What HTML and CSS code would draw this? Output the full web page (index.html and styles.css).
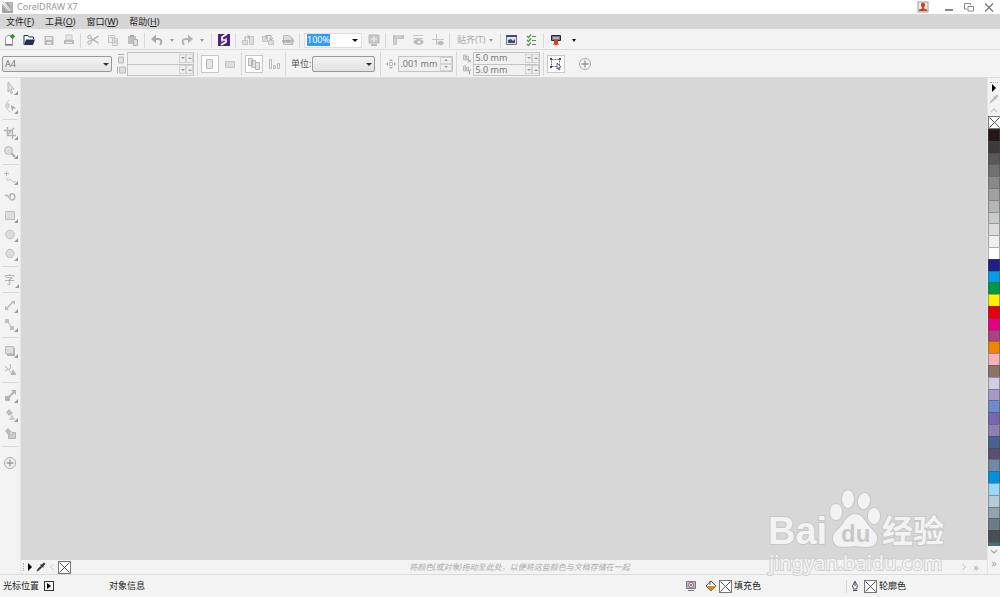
FILE: index.html
```html
<!DOCTYPE html>
<html lang="zh-CN">
<head>
    <meta charset="UTF-8">
    <meta name="viewport" content="width=device-width, initial-scale=1.0">
    <title>CorelDRAW X7</title>
    <link rel="stylesheet" href="styles.css">
</head>
<body>
    <svg width="0" height="0" class="defs">
        <symbol id="nocolor" viewBox="0 0 13 13">
            <rect x=".5" y=".5" width="12" height="12" fill="#fff" stroke="#777"/>
            <path d="M1.500 1.500l10 10M11.500 1.500l-10 10" stroke="#444" stroke-width=".9"/>
        </symbol>
        <symbol id="dropper" viewBox="0 0 12 12">
            <path d="M1 11l1-2.500 4-4 1.500 1.500-4 4z" fill="currentColor" stroke="currentColor" stroke-width=".5"/>
            <path d="M5 3.500l3.500 3.500 1-1-.8-.8L11 3c.8-1-.9-2.800-2-2L6.800 3.200 6 2.500z" fill="currentColor"/>
        </symbol>
        <symbol id="plus" viewBox="0 0 16 16">
            <circle cx="8" cy="8" r="5.500" fill="none" stroke="#aaa"/>
            <path d="M8 4.500v7M4.500 8h7" stroke="#999" stroke-width="1.400"/>
        </symbol>
        <symbol id="corner" viewBox="0 0 4 4"><path d="M4 0v4H0z" fill="#999"/></symbol>
    </svg>

    <header class="titlebar">
        <svg class="logo" viewBox="0 0 12 12"><rect width="12" height="12" fill="#a4a4a4"/><path d="M3 0l7 9-3 1L0 3V0z" fill="#fff"/><path d="M0 2l8 8M1 0l8 9M5 0l5 8" stroke="#999" stroke-width=".8"/><path d="M6 0h6v9h-2z" fill="#b4b4b4"/></svg>
        <h1>CorelDRAW X7</h1>
        <div class="window-buttons">
            <button class="user" aria-label="用户"><svg viewBox="0 0 12 12"><rect x="1" y="1" width="10" height="10" fill="#eee" stroke="#999"/><circle cx="6" cy="4" r="2.200" fill="#d0401c"/><path d="M5 5h2v2.500l3 1V10H2V8.500l3-1z" fill="#d0401c"/></svg></button>
            <button aria-label="最小化"><svg viewBox="0 0 12 12"><path d="M2 9h8" stroke="#888" stroke-width="2"/></svg></button>
            <button aria-label="还原"><svg viewBox="0 0 12 12"><path d="M4 8H1.500V2.500h6V4M5 5.500h5.500V10H5z" fill="none" stroke="#888"/></svg></button>
            <button aria-label="关闭"><svg viewBox="0 0 12 12"><path d="M2 2.500l8 8M10 2.500l-8 8" stroke="#777" stroke-width="1.300"/></svg></button>
        </div>
    </header>

    <nav class="menubar">
        <a href="#">文件(<u>F</u>)</a>
        <a href="#">工具(<u>O</u>)</a>
        <a href="#">窗口(<u>W</u>)</a>
        <a href="#">帮助(<u>H</u>)</a>
    </nav>

    <div class="toolbar">
        <div class="group">
            <button aria-label="新建"><svg viewBox="0 0 16 16"><path d="M4.500 5.500L7 3.500h4.500v9h-7z" fill="#fff" stroke="#99a"/><path d="M4 13h8" stroke="#556"/><circle cx="11.500" cy="4.500" r="2" fill="#2e9c1c"/><path d="M11.500 2v5M9 4.500h5" stroke="#2e9c1c"/></svg></button>
            <button aria-label="打开"><svg viewBox="0 0 16 16"><path d="M3 12.500v-9h4l1 1.500h4.500v2" fill="#fff" stroke="#223058"/><path d="M3 13l2-5.500h9L12 13z" fill="#223058"/></svg></button>
            <button aria-label="保存"><svg viewBox="0 0 16 16"><path d="M3.500 4h9v9h-9z" fill="#bbb"/><path d="M5 5h6v3H5zM6 10h4v2H6z" fill="#e6e6e6"/></svg></button>
            <button aria-label="打印"><svg viewBox="0 0 16 16"><path d="M5 3h6v5H5z" fill="#e8e8e8" stroke="#c4c4c4"/><path d="M3 8h10v4H3z" fill="#bbb"/><path d="M5 10.500h6" stroke="#eee"/></svg></button>
        </div>
        <div class="group">
            <button aria-label="剪切"><svg viewBox="0 0 16 16"><path d="M13.500 4L6 9M13.500 11L6 6.500" stroke="#aaa" stroke-width="1.400"/><circle cx="4.500" cy="5" r="1.700" fill="none" stroke="#aaa"/><circle cx="4.500" cy="10.500" r="1.700" fill="none" stroke="#aaa"/></svg></button>
            <button aria-label="复制"><svg viewBox="0 0 16 16"><path d="M3.500 3.500h6v7h-6zM7.500 6.500h5v7h-5z" fill="#eee" stroke="#c4c4c4"/><path d="M9 9h3M9 11h3M5 5.500h3" stroke="#bbb"/></svg></button>
            <button aria-label="粘贴"><svg viewBox="0 0 16 16"><path d="M3 4h8v8H3z" fill="#c0c0c0"/><path d="M5 3h4v2H5z" fill="#aaa"/><path d="M8.500 7.500h4v6h-4z" fill="#ddd" stroke="#b0b0b0"/></svg></button>
        </div>
        <div class="group group-undo">
            <button aria-label="撤消"><svg viewBox="0 0 16 16"><path d="M4.500 7H9c4 0 4 3.500 2 6" fill="none" stroke="#aaa" stroke-width="2"/><path d="M2 7l5-4.500v9z" fill="#aaa"/></svg></button>
            <button class="caret" aria-label="撤消列表"></button>
            <button aria-label="重做"><svg viewBox="0 0 16 16"><path d="M11.500 7H7c-4 0-4 3.500-2 6" fill="none" stroke="#b4b4b4" stroke-width="2"/><path d="M14 7L9 2.500v9z" fill="#b4b4b4"/></svg></button>
            <button class="caret" aria-label="重做列表"></button>
        </div>
        <div class="group">
            <button aria-label="搜索内容"><svg viewBox="0 0 16 16"><path d="M2 2h12v12H2z" fill="#4d2472"/><path d="M11 2L6 5v3h4v2l-5 3" fill="none" stroke="#fff" stroke-width="1.700"/><path d="M5 10l6-4" stroke="#d8c8e8"/></svg></button>
        </div>
        <div class="group">
            <button aria-label="导入"><svg viewBox="0 0 16 16"><path d="M2.500 8.500h5v4h-5zM9.500 4.500h4v8h-4z" fill="#ddd" stroke="#c4c4c4"/><path d="M5 8V5h4M7.500 3L10 5 7.500 7" fill="none" stroke="#aaa"/></svg></button>
            <button aria-label="导出"><svg viewBox="0 0 16 16"><path d="M2.500 4.500h5v5h-5zM8.500 8.500h5v4h-5z" fill="#ddd" stroke="#c4c4c4"/><path d="M6 7V3.500h5V7M9 6l2 2 2-2" fill="none" stroke="#aaa"/></svg></button>
            <button aria-label="发布为 PDF"><svg viewBox="0 0 16 16"><path d="M3.500 3.500h6L13 7v5.500H3.500z" fill="#ddd" stroke="#bbb"/><path d="M2 8h9V6l3.500 3-3.500 3v-2H2z" fill="#bbb"/><path d="M4 8v3M7 8v3M9 8v3" stroke="#999"/></svg></button>
        </div>
        <div class="group">
            <div class="zoom-combo">
                <input type="text" value="100%" aria-label="缩放级别">
                <button class="caret dark" aria-label="缩放列表"></button>
            </div>
            <button aria-label="全屏预览"><svg viewBox="0 0 16 16"><path d="M3 3h10v8H3z" fill="#c8c8c8" stroke="#bbb"/><path d="M8 4v6M5 7h6" stroke="#f3f3f3"/><path d="M5 13h6" stroke="#bbb" stroke-width="2"/></svg></button>
        </div>
        <div class="group">
            <button aria-label="显示标尺"><svg viewBox="0 0 16 16"><path d="M3 3h11v4H7v6H3z" fill="#c4c4c4"/><path d="M5 7v6M7 3v3M10 3v2" stroke="#ddd"/></svg></button>
            <button aria-label="显示网格"><svg viewBox="0 0 16 16"><path d="M3 3h10v1H3zM3 6h10v1H3z" fill="#c4c4c4"/><path d="M3 10c3-4 8-4 11 0-3 4-8 4-11 0z" fill="#bbb"/><circle cx="9" cy="10" r="1.500" fill="#eee"/></svg></button>
            <button aria-label="显示辅助线"><svg viewBox="0 0 16 16"><path d="M6.500 2v11M2 7.500h12" stroke="#c4c4c4"/><path d="M7 11c2-3 5-3 7 0-2 3-5 3-7 0z" fill="#bbb"/></svg></button>
        </div>
        <div class="group group-snap">
            <button class="snap">贴齐(T)</button>
            <button class="caret" aria-label="贴齐选项"></button>
        </div>
        <div class="group group-options">
            <button aria-label="欢迎屏幕"><svg viewBox="0 0 16 16"><path d="M2.500 3.500h10v9h-10z" fill="#dfe3ef" stroke="#6a7290"/><path d="M2 3h11v2H2z" fill="#404b74"/><path d="M4 11V8l3-1 2 2 2-2v4z" fill="#404b74"/></svg></button>
            <button aria-label="选项"><svg viewBox="0 0 16 16"><path d="M3 4l1.500 1.500L7 2.500M3 8l1.500 1.500L7 6.500M3 12l1.500 1.500L7 10.500" fill="none" stroke="#4f9a45" stroke-width="1.300"/><path d="M8 4.500h4M8 8.500h4M8 12.500h4" stroke="#777"/></svg></button>
        </div>
        <div class="group last">
            <button aria-label="应用程序启动器"><svg viewBox="0 0 16 16"><path d="M3.500 3.500h9v5h-9z" fill="#778" stroke="#223"/><path d="M5 5h6v2H5z" fill="#aab"/><path d="M6 8h4v3l1 2-2-.5-1 1.500-1-1.500-2 .5 1-2z" fill="#dd3a1e"/></svg></button>
            <button class="caret dark" aria-label="启动器列表"></button>
        </div>
    </div>

    <div class="propbar">
        <div class="group">
            <span class="select page-size">
                <select aria-label="页面大小"><option>A4</option></select>
            </span>
            <div class="size-icons">
                <svg viewBox="0 0 10 10"><path d="M2.500 3.500h5v6h-5z" fill="#ddd" stroke="#bbb"/><path d="M2 1h6" stroke="#aaa"/></svg>
                <svg viewBox="0 0 10 10"><path d="M3.500 2.500h6v6h-6z" fill="#ddd" stroke="#bbb"/><path d="M1.500 2v7" stroke="#aaa"/></svg>
            </div>
            <div class="pair">
                <div class="field"><input type="text" aria-label="页面宽度"><button class="down" aria-label="减少"></button><button class="up" aria-label="增加"></button></div>
                <div class="field"><input type="text" aria-label="页面高度"><button class="down" aria-label="减少"></button><button class="up" aria-label="增加"></button></div>
            </div>
        </div>
        <div class="group">
            <button class="pressed" aria-label="纵向"><svg viewBox="0 0 16 16"><path d="M4.500 3.500h6v9h-6z" fill="#e4e4e4" stroke="#bbb"/></svg></button>
            <button aria-label="横向"><svg viewBox="0 0 16 16"><path d="M3.500 5.500h9v6h-9z" fill="#ddd" stroke="#c4c4c4"/></svg></button>
        </div>
        <div class="group">
            <button class="pressed" aria-label="所有页面"><svg viewBox="0 0 16 16"><path d="M2.500 2.500h4v7h-4zM5.500 4.500h4v7h-4zM9.500 6.500h4v7h-4z" fill="#e4e4e4" stroke="#b4b4b4"/></svg></button>
            <button aria-label="当前页"><svg viewBox="0 0 16 16"><path d="M3.500 3.500h2v9h-2zM7.500 9.500h2v3h-2zM11.500 7.500h2v5h-2z" fill="#eee" stroke="#bbb"/></svg></button>
        </div>
        <div class="group group-units">
            <label for="units">单位:</label>
            <span class="select units"><select id="units"><option></option></select></span>
        </div>
        <div class="group group-nudge">
            <svg class="icon-small" viewBox="0 0 10 10"><path d="M5 0l2 2H3zM5 10L3 8h4zM0 5l2-2v4zM10 5L8 7V3z" fill="#aaa"/><path d="M3.500 3.500h3v3h-3z" fill="none" stroke="#bbb"/></svg>
            <div class="field nudge"><input type="text" value=".001 mm" aria-label="微调距离"><div class="spin"><button class="up" aria-label="增加"></button><button class="down" aria-label="减少"></button></div></div>
        </div>
        <div class="group group-offset">
            <div class="size-icons">
                <svg viewBox="0 0 10 10"><path d="M1.500 1.500h2v5h-2zM4.500 2.500h2v4h-2z" fill="#ddd" stroke="#bbb"/><path d="M6 6l3 3M9 6L6 9" stroke="#999"/></svg>
                <svg viewBox="0 0 10 10"><path d="M1.500 1.500h2v5h-2zM4.500 2.500h2v4h-2z" fill="#ddd" stroke="#bbb"/><path d="M6 5l1.500 2L9 5M7.500 7v3" fill="none" stroke="#999"/></svg>
            </div>
            <div class="pair">
                <div class="field"><input type="text" value="5.0 mm" aria-label="再制距离 X"><button class="down" aria-label="减少"></button><button class="up" aria-label="增加"></button></div>
                <div class="field"><input type="text" value="5.0 mm" aria-label="再制距离 Y"><button class="down" aria-label="减少"></button><button class="up" aria-label="增加"></button></div>
            </div>
        </div>
        <div class="group last">
            <button class="pressed" aria-label="视为已填充"><svg viewBox="0 0 16 16"><path d="M3.500 3.500h8v7h-8z" fill="none" stroke="#668" stroke-dasharray="2 1"/><path d="M2 2h2v2H2zM11 2h2v2h-2zM2 10h2v2H2z" fill="#446"/><path d="M9 7l4 4-2 .3 1 2.200-1 .5-1-2.300L9 13z" fill="#fff" stroke="#446" stroke-width=".8"/></svg></button>
            <button class="add" aria-label="快速自定义"><svg viewBox="0 0 16 16"><use href="#plus"/></svg></button>
        </div>
    </div>

    <div class="main">
        <aside class="toolbox">
            <div class="tools">
                <button aria-label="选择"><svg viewBox="0 0 16 16"><path d="M6 2l6 7-3 .5 1.500 3.500-1.500.7L7.500 10 6 12z" fill="#ddd" stroke="#bbb"/><use href="#corner" x="12" y="11" width="4" height="4"/></svg></button>
                <button aria-label="形状"><svg viewBox="0 0 16 16"><path d="M7 1C3 5 3 9 8 13" fill="none" stroke="#c4c4c4"/><path d="M4 5h3v3H4z" fill="#ddd" stroke="#c4c4c4"/><path d="M9 6l5 3-3 1-1 3z" fill="#aaa"/><use href="#corner" x="12" y="11" width="4" height="4"/></svg></button>
            </div>
            <div class="tools">
                <button aria-label="裁剪"><svg viewBox="0 0 16 16"><path d="M5.500 2v8.500H14M2 5.500h8.500V14M12 3l-7 7" fill="none" stroke="#b4b4b4" stroke-width="1.400"/><use href="#corner" x="12" y="11" width="4" height="4"/></svg></button>
                <button aria-label="缩放"><svg viewBox="0 0 16 16"><path d="M9 9l4 4" stroke="#aaa" stroke-width="2"/><circle cx="6.500" cy="6.500" r="4" fill="#ddd" stroke="#bbb"/><use href="#corner" x="12" y="11" width="4" height="4"/></svg></button>
            </div>
            <div class="tools">
                <button aria-label="手绘"><svg viewBox="0 0 16 16"><path d="M4.500 1v5M2 3.500h5M4 8c3 6 3-1 5 2s2 1 5 2" fill="none" stroke="#bbb"/><use href="#corner" x="12" y="11" width="4" height="4"/></svg></button>
                <button aria-label="艺术笔"><svg viewBox="0 0 16 16"><path d="M3 7c3-3 4 4 7 4s4-5 1-6-4 1-2 3" fill="none" stroke="#b4b4b4" stroke-width="1.500"/></svg></button>
                <button aria-label="矩形"><svg viewBox="0 0 16 16"><path d="M3.500 3.500h9v8h-9z" fill="#ddd" stroke="#c0c0c0"/><use href="#corner" x="12" y="11" width="4" height="4"/></svg></button>
                <button aria-label="椭圆形"><svg viewBox="0 0 16 16"><circle cx="8" cy="7.500" r="4.300" fill="#ddd" stroke="#c0c0c0"/><use href="#corner" x="12" y="11" width="4" height="4"/></svg></button>
                <button aria-label="多边形"><svg viewBox="0 0 16 16"><path d="M6 3.500h4l2.500 4-2.500 4H6l-2.500-4z" fill="#ddd" stroke="#c0c0c0"/><use href="#corner" x="12" y="11" width="4" height="4"/></svg></button>
            </div>
            <div class="tools">
                <button class="text-tool" aria-label="文本">字<svg viewBox="0 0 4 4"><use href="#corner"/></svg></button>
            </div>
            <div class="tools">
                <button aria-label="平行度量"><svg viewBox="0 0 16 16"><path d="M4 11l8-8" stroke="#b4b4b4" stroke-width="1.500"/><path d="M3 8l4 4H3zM9 3h4v4z" fill="#bbb"/><use href="#corner" x="12" y="11" width="4" height="4"/></svg></button>
                <button aria-label="直线连接器"><svg viewBox="0 0 16 16"><path d="M5 4l5 7" stroke="#b4b4b4"/><path d="M3 2h4v4H3zM8 9h4v4H8z" fill="#c0c0c0"/><use href="#corner" x="12" y="11" width="4" height="4"/></svg></button>
            </div>
            <div class="tools">
                <button aria-label="阴影"><svg viewBox="0 0 16 16"><path d="M5 5h8v8H5z" fill="#b4b4b4"/><path d="M3.500 3.500h8v7h-8z" fill="#ddd" stroke="#bbb"/><use href="#corner" x="12" y="11" width="4" height="4"/></svg></button>
                <button aria-label="透明度"><svg viewBox="0 0 16 16"><path d="M3 9l6-3-1-4M3 4l6 6" fill="none" stroke="#b4b4b4"/><path d="M11 7l3.500 6h-6z" fill="#b4b4b4"/></svg></button>
            </div>
            <div class="tools">
                <button aria-label="颜色滴管"><svg viewBox="0 0 16 16"><path d="M3 8h5v5H3z" fill="#b4b4b4"/><path d="M6 10l6-6" stroke="#b4b4b4" stroke-width="2"/><path d="M9 2h5v5z" fill="#b4b4b4"/><use href="#corner" x="12" y="11" width="4" height="4"/></svg></button>
                <button aria-label="交互式填充"><svg viewBox="0 0 16 16"><path d="M7 2l4 4-4 3-3-4z" fill="#bbb"/><path d="M10 7l3 6H7z" fill="#ccc"/><use href="#corner" x="12" y="11" width="4" height="4"/></svg></button>
                <button aria-label="智能填充"><svg viewBox="0 0 16 16"><path d="M6 2l4 4-4 3-3-4z" fill="#bbb"/><path d="M6.500 8.500h4v-2h3v6h-7z" fill="#ccc" stroke="#b4b4b4"/></svg></button>
            </div>
            <button class="add" aria-label="快速自定义"><svg viewBox="0 0 16 16"><use href="#plus"/></svg></button>
        </aside>

        <div class="center">
            <main class="workspace"></main>
            <div class="doc-palette">
                <span class="grip"></span>
                <button class="play" aria-label="文档调色板菜单"></button>
                <button aria-label="滴管"><svg class="icon-small drop-dark" viewBox="0 0 12 12"><use href="#dropper"/></svg></button>
                <button aria-label="向左滚动"><svg class="arrow" viewBox="0 0 6 10"><path d="M4.500 2L1.500 5l3 3" fill="none" stroke="#c4c4c4"/></svg></button>
                <button aria-label="无颜色"><svg class="x-box" viewBox="0 0 13 13"><use href="#nocolor"/></svg></button>
                <p class="hint">将颜色(或对象)拖动至此处，以便将这些颜色与文档存储在一起</p>
                <button aria-label="向右滚动"><svg class="arrow" viewBox="0 0 6 10"><path d="M1.500 2l3 3-3 3" fill="none" stroke="#bbb"/></svg></button>
                <button class="more" aria-label="展开">»</button>
            </div>
        </div>

        <aside class="palette">
            <span class="grip"></span>
            <button class="play" aria-label="调色板菜单"></button>
            <button aria-label="滴管"><svg class="icon-small drop-light" viewBox="0 0 12 12"><use href="#dropper"/></svg></button>
            <button aria-label="向上滚动"><svg class="chev" viewBox="0 0 10 8"><path d="M2 5.500l3-3 3 3" fill="none" stroke="#ccc" stroke-width="1.300"/></svg></button>
            <button aria-label="无颜色"><svg class="x-box" viewBox="0 0 13 13"><use href="#nocolor"/></svg></button>
            <div class="swatches" id="swatches"></div>
            <button aria-label="向下滚动"><svg class="chev" viewBox="0 0 10 8"><path d="M2 2.500l3 3 3-3" fill="none" stroke="#aaa" stroke-width="1.300"/></svg></button>
            <button class="more" aria-label="展开">»</button>
        </aside>
    </div>

    <footer class="statusbar">
        <span>光标位置</span>
        <button class="play boxed" aria-label="光标信息"></button>
        <span class="object-info">对象信息</span>
        <div class="color-info">
            <svg class="status-icon" viewBox="0 0 12 12"><path d="M1.500 1.500h9v7h-9z" fill="#b9b4d0" stroke="#778"/><circle cx="6" cy="5" r="2.500" fill="#eee" stroke="#a66"/><circle cx="6" cy="5" r="1" fill="#558"/><path d="M3 10.500h6" stroke="#778"/></svg>
            <svg class="status-icon" viewBox="0 0 12 12"><path d="M6 1l5 5-5 5-5-5z" fill="#fff" stroke="#556"/><path d="M2 6h9l-5 5z" fill="#e88318"/><path d="M5 1v4" stroke="#556"/></svg>
            <svg class="x-box" viewBox="0 0 13 13"><use href="#nocolor"/></svg>
            <span>填充色</span>
        </div>
        <div class="color-info outline-info">
            <svg class="status-icon" viewBox="0 0 12 12"><path d="M6 1l2.500 5L7.500 9h-3l-1-3z" fill="#eee" stroke="#556"/><path d="M6 2v4M4 10.500h4" stroke="#445"/></svg>
            <svg class="x-box" viewBox="0 0 13 13"><use href="#nocolor"/></svg>
            <span>轮廓色</span>
        </div>
    </footer>

    <svg class="watermark" viewBox="0 0 190 95">
        <g class="mark">
            <text class="bai" x="8" y="59">Bai</text>
            <ellipse cx="76" cy="27" rx="6" ry="8"/>
            <ellipse cx="88" cy="14" rx="6" ry="9"/>
            <ellipse cx="104" cy="16" rx="6" ry="8" transform="rotate(10 104 16)"/>
            <ellipse cx="114" cy="31" rx="6" ry="8"/>
            <path d="M95 29c6 0 9 5 13 11 4 5 9 8 9 13 0 6-4 9-10 9-5 0-8-1-12-1s-7 1-12 1c-6 0-10-3-10-9 0-5 5-8 9-13 4-6 7-11 13-11z"/>
            <text class="jingyan" x="122" y="57">经验</text>
            <text class="url" x="9" y="85">jingyan.baidu.com</text>
        </g>
        <text class="du" x="81" y="57">du</text>
    </svg>

    <script>
        const colors = [
            '#231815', '#3e3a39', '#595757', '#727171', '#898989', '#9fa0a0',
            '#b5b5b6', '#c9caca', '#dcdddd', '#efefef', '#ffffff', '#1d2088',
            '#00a0e9', '#009944', '#fff100', '#e60012', '#e4007f', '#ae4185',
            '#f08300', '#f4b2b2', '#8a7467', '#d2cde6', '#a59aca', '#6c8dcb',
            '#7866b0', '#8f82b0', '#4a628f', '#5a4f72', '#7388a3', '#0090dc',
            '#9bd8f6', '#b5cdd9', '#90a5ae', '#6a7c85', '#444f58', '#4a7072'
        ];
        const swatches = document.getElementById('swatches');
        colors.forEach(function(color) {
            const button = document.createElement('button');
            button.style.backgroundColor = color;
            button.setAttribute('aria-label', color);
            swatches.appendChild(button);
        });
    </script>
</body>
</html>
```
FILE: styles.css
```css
* {
    box-sizing: border-box;
}
body {
    margin: 0;
    height: 100vh;
    display: flex;
    flex-direction: column;
    overflow: hidden;
    background: #f3f3f3;
    color: #222;
    font-family: "Noto Sans", "Noto Sans CJK SC", sans-serif;
    font-size: 9px;
    line-height: 12px;
}
button, input, select {
    font: inherit;
    color: inherit;
    margin: 0;
    padding: 0;
    border: none;
    background: none;
    border-radius: 0;
}
button {
    display: flex;
    align-items: center;
    justify-content: center;
    flex: none;
}
svg {
    display: block;
    flex: none;
}
.defs {
    position: absolute;
}

/* title and menu */
.titlebar {
    display: flex;
    align-items: center;
    height: 14px;
    flex: none;
    padding: 0 5px 0 2px;
    gap: 4px;
    background: #fff;
}
.titlebar h1 {
    margin: 0;
    font-size: 9px;
    font-weight: normal;
    color: #999;
}
.logo {
    width: 11px;
    height: 11px;
}
.window-buttons {
    display: flex;
    gap: 8px;
    margin-left: auto;
}
.window-buttons svg {
    width: 12px;
    height: 12px;
}
.user {
    margin-right: 6px;
}
.menubar {
    display: flex;
    align-items: center;
    height: 15px;
    flex: none;
    gap: 11px;
    padding-left: 6px;
    background: #d6d6d6;
}
.menubar a {
    color: #222;
    text-decoration: none;
}

/* toolbars */
.toolbar, .propbar {
    display: flex;
    align-items: center;
    flex: none;
    border-bottom: 1px solid #dcdcdc;
}
.toolbar {
    height: 21px;
    padding-top: 2px;
}
.propbar {
    height: 28px;
    padding-left: 1px;
}
.group {
    display: flex;
    align-items: center;
    gap: 4px;
    height: 15px;
    padding: 0 3px 0 4px;
    border-right: 1px solid #d8d8d8;
}
.propbar .group {
    height: 24px;
}
.group:first-child {
    padding-left: 1px;
}
.group.last {
    border-right: none;
}
.group > button > svg {
    width: 16px;
    height: 16px;
}
.group-undo {
    gap: 1px;
}
.caret {
    width: 12px;
    height: 14px;
}
.caret::after {
    content: "";
    border: 2px solid transparent;
    border-top: 3px solid #999;
    border-bottom: none;
}
.caret.dark::after {
    border-width: 3px 3px 0;
    border-top-color: #111;
}
.last .caret.dark::after {
    border-width: 3px 2px 0;
}
.zoom-combo {
    display: flex;
    align-items: center;
    justify-content: space-between;
    width: 58px;
    height: 15px;
    padding-left: 2px;
    background: #fff;
    border: 1px solid #ddd;
}
.zoom-combo input {
    width: 23px;
    height: 12px;
    color: #fff;
    background: #3399ff;
}
.group-snap {
    padding: 0 3px 0 7px;
    gap: 0;
}
.group-options {
    padding-left: 3px;
}
.snap {
    color: #aaa;
}
.pressed {
    background: #fff;
    outline: 1px solid #c8c8c8;
}

/* property bar fields */
.select {
    position: relative;
    display: flex;
}
.select select {
    appearance: none;
    width: 100%;
    height: 16px;
    padding-left: 2px;
    color: #777;
    border: 1px solid #999;
    border-radius: 2px;
    background: linear-gradient(#f3f3f3, #e2e2e2);
}
.select::after {
    content: "";
    position: absolute;
    right: 3px;
    top: 7px;
    border: 3px solid transparent;
    border-top-color: #333;
    border-bottom: none;
}
.page-size {
    width: 110px;
}
.units {
    width: 63px;
}
.size-icons svg {
    width: 10px;
    height: 11px;
}
.pair {
    width: 67px;
    border: 1px solid #c4c4c4;
}
.field {
    display: flex;
    align-items: center;
    height: 11px;
    background: #f0f0f0;
}
.field + .field {
    border-top: 1px solid #c4c4c4;
}
.field input {
    flex: 1;
    min-width: 0;
    height: 10px;
    padding-left: 1px;
    color: #777;
}
.field button {
    width: 7px;
    height: 9px;
    border: 1px solid #d4d4d4;
}
.field button::after {
    content: "";
    border: 1px solid transparent;
}
.field .down::after {
    border-width: 2px 2px 0;
    border-top-color: #999;
}
.field .up::after {
    border-width: 0 2px 2px;
    border-bottom-color: #999;
}
.propbar .size-icons + .pair {
    margin-left: -3px;
}
.group-units {
    gap: 1px;
    padding: 0 5px;
}
.group-units label {
    color: #555;
}
.group-nudge {
    gap: 2px;
    padding-left: 5px;
}
.icon-small {
    width: 10px;
    height: 10px;
}
.field.nudge {
    width: 55px;
    height: 16px;
    border: 1px solid #c4c4c4;
}
.spin button {
    width: 12px;
    height: 7px;
}
.group-offset {
    padding-left: 5px;
}
.group .add {
    margin-left: 9px;
}

/* main area */
.main {
    display: flex;
    flex: 1;
    min-height: 0;
}
.toolbox {
    width: 21px;
    flex: none;
    padding-top: 2px;
    border-right: 1px solid #e4e4e4;
}
.tools {
    display: flex;
    flex-direction: column;
    align-items: center;
    gap: 3px;
    margin: 0 2px 5px;
    padding-bottom: 4px;
    border-bottom: 1px solid #d8d8d8;
}
.toolbox svg {
    width: 16px;
    height: 16px;
}
.toolbox .add {
    margin: 8px 0 0 2px;
}
.text-tool {
    height: 16px;
    width: 16px;
    padding-left: 3px;
    align-items: flex-end;
    color: #aaa;
    font-size: 11px;
    line-height: 16px;
}
.toolbox .text-tool svg {
    width: 4px;
    height: 4px;
}
.center {
    display: flex;
    flex-direction: column;
    flex: 1;
    min-width: 0;
}
.workspace {
    flex: 1;
    background: #d7d7d7;
}
.doc-palette {
    display: flex;
    align-items: center;
    gap: 2px;
    height: 14px;
    flex: none;
    padding: 0 5px 0 2px;
}
.grip {
    width: 1px;
    height: 8px;
    border-left: 1px dotted #aaa;
}
.play {
    width: 8px;
    height: 10px;
}
.play::after {
    content: "";
    border: 4px solid transparent;
    border-left-color: #000;
    border-right: none;
}
.drop-dark {
    color: #333a40;
}
.drop-light {
    color: #bbb;
}
.arrow {
    width: 8px;
    height: 10px;
}
.x-box {
    width: 13px;
    height: 13px;
}
.hint {
    flex: 1;
    margin: 0;
    padding-left: 8px;
    text-align: center;
    font-size: 8px;
    font-style: italic;
    color: #aaa;
}
.more {
    width: 12px;
    height: 12px;
    font-size: 11px;
    color: #aaa;
}

/* colour palette */
.palette {
    display: flex;
    flex-direction: column;
    align-items: center;
    width: 13px;
    flex: none;
    padding: 4px 0 5px;
    border-left: 1px solid #e4e4e4;
}
.palette .grip {
    width: 8px;
    height: 1px;
    border-left: none;
    border-top: 1px dotted #aaa;
}
.palette .drop-light {
    height: 12px;
}
.palette .chev {
    width: 10px;
    height: 11px;
}
.swatches {
    display: flex;
    flex-direction: column;
    flex: 1;
    width: 12px;
    min-height: 0;
}
.swatches button {
    flex: 1;
    border: 1px solid rgba(70, 70, 70, 0.45);
    border-bottom: none;
}
.swatches button:last-child {
    flex: none;
    height: 4px;
}

/* status bar */
.statusbar {
    display: flex;
    align-items: center;
    height: 23px;
    flex: none;
    padding: 0 94px 0 3px;
    gap: 5px;
    border-top: 1px solid #dcdcdc;
}
.boxed {
    width: 10px;
    height: 10px;
    border: 1px solid #333;
}
.boxed::after {
    border-width: 3px 0 3px 4px;
}
.object-info {
    margin-left: 50px;
}
.color-info {
    display: flex;
    align-items: center;
    gap: 2px;
    margin-left: auto;
}
.color-info .status-icon:first-child {
    margin-right: 6px;
}
.status-icon {
    width: 12px;
    height: 12px;
}
.outline-info {
    margin-left: 80px;
    padding-left: 2px;
    border-left: 1px solid #d8d8d8;
}
.outline-info .status-icon:first-child {
    margin-right: 1px;
}

/* watermark over the canvas */
.watermark {
    position: absolute;
    right: 50px;
    bottom: 17px;
    width: 190px;
    height: 95px;
    pointer-events: none;
}
.mark {
    fill: #f3f3f3;
    stroke: #c8c8c8;
    stroke-width: 2px;
    paint-order: stroke;
}
.bai {
    font: bold 38px "Liberation Sans", sans-serif;
}
.jingyan {
    font: bold 31px "Noto Sans CJK SC", sans-serif;
}
.url {
    font: 20px "Noto Sans", sans-serif;
    stroke: #d0d0d0;
}
.du {
    font: bold 24px "Liberation Sans", sans-serif;
    fill: #c8c8c8;
}
```
